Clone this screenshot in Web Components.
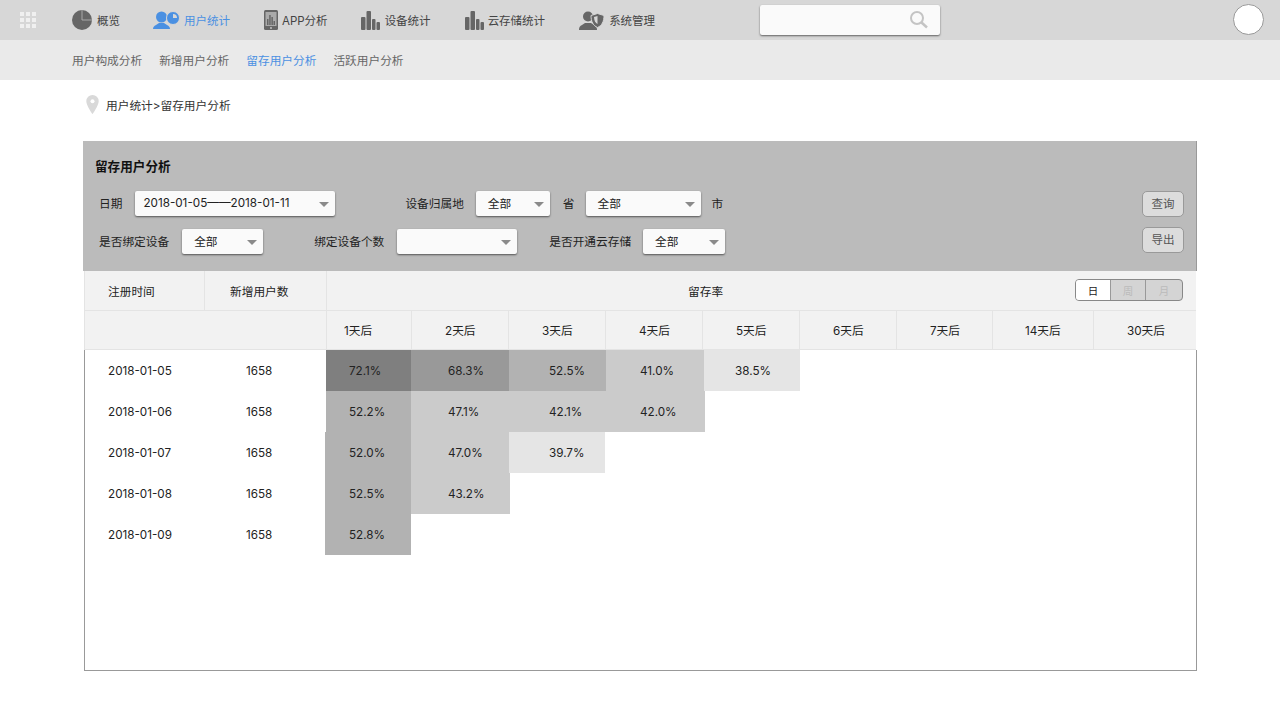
<!DOCTYPE html>
<html lang="zh-CN"><head><meta charset="utf-8"><title>留存用户分析</title>
<style>
html,body{margin:0;padding:0;background:#fff}
body{font-family:Inter,"Noto Sans CJK SC",sans-serif;font-size:12px;color:#333;width:1280px;height:720px;overflow:hidden}
</style></head><body>
<app-topbar>
  <nav-item label="概览" style="margin-left:72px;--w:25px"><svg viewBox="0 0 20 20" width="20" height="20"><circle cx="10" cy="10" r="10" fill="#666"/><path fill="none" stroke="#a8a8a8" stroke-width="1" d="M10 0V10H20"/></svg></nav-item>
  <nav-item label="用户统计" active style="margin-left:33px;--w:31px"><svg viewBox="0 0 27 20" width="27" height="20"><circle cx="8.500" cy="7" r="5.500" fill="#4a90e2"/><path fill="#4a90e2" d="M0 19c0-2 1-3 3-4l3-2h5l3 2c2 1 3 2 3 4Z"/><circle cx="20" cy="8" r="6.500" fill="#4a90e2" stroke="#d7d7d7"/><path fill="#d7d7d7" d="M20 4a4 4 0 0 1 4 4h-4Z"/></svg></nav-item>
  <nav-item label="APP分析" style="margin-left:34px;--w:18px"><svg viewBox="0 0 14 20" width="14" height="20"><rect width="14" height="20" rx="1.500" fill="#666"/><rect x="1.500" y="2" width="11" height="14" fill="#aaa"/><path fill="#666" d="M3 15V9h1.500v6Zm2.200 0V5h1.500v10Zm2.200 0V7h1.500v8Zm2.100 0v-4h1.500v4Z"/><circle cx="7" cy="18" r=".9" fill="#ccc"/></svg></nav-item>
  <nav-item label="设备统计" style="margin-left:33px;--w:24px"><svg viewBox="0 0 19 19" width="19" height="19"><g fill="#666"><rect y="6" width="4.500" height="13" rx="1"/><rect x="5.500" width="4.500" height="19" rx="1"/><rect x="11" y="8" width="3.500" height="11" rx="1"/><rect x="15.500" y="11" width="3.500" height="8" rx="1"/></g></svg></nav-item>
  <nav-item label="云存储统计" style="margin-left:34px;--w:23px"><svg viewBox="0 0 19 19" width="19" height="19"><g fill="#666"><rect y="6" width="4.500" height="13" rx="1"/><rect x="5.500" width="4.500" height="19" rx="1"/><rect x="11" y="8" width="3.500" height="11" rx="1"/><rect x="15.500" y="11" width="3.500" height="8" rx="1"/></g></svg></nav-item>
  <nav-item label="系统管理" style="margin-left:34px;--w:30px"><svg viewBox="0 0 25 19" width="25" height="19"><circle cx="9" cy="5.500" r="5" fill="#666"/><path fill="#666" d="M0 19c0-3 1-4 3-5l3-2h6l3 2c2 1 3 2 3 5Z"/><path fill="#666" stroke="#d7d7d7" d="M18.500 2.500 25 4.500c0 6-2 10-6.500 12C14 14.500 12 10.500 12 4.500Z"/><path fill="#d7d7d7" d="M18.500 5v8c-2-1-3.300-3-3.500-7Z"/></svg></nav-item>
  <search-box></search-box>
  <user-avatar></user-avatar>
</app-topbar>
<app-subnav><a>用户构成分析</a><a>新增用户分析</a><a class="on" style="color:#4a90e2">留存用户分析</a><a>活跃用户分析</a></app-subnav>
<app-crumb>用户统计&gt;留存用户分析</app-crumb>
<filter-panel>
  <span slot="title">留存用户分析</span>
  <filter-row slot="rows">
    <f-label style="margin-left:16px">日期</f-label>
    <select-box w="200" pad="8" style="margin-left:13px">2018-01-05——2018-01-11</select-box>
    <f-label style="margin-left:70px">设备归属地</f-label>
    <select-box w="74" pad="12" style="margin-left:12px">全部</select-box>
    <f-label style="margin-left:13px">省</f-label>
    <select-box w="115" pad="12" style="margin-left:11px">全部</select-box>
    <f-label style="margin-left:11px">市</f-label>
  </filter-row>
  <filter-row slot="rows">
    <f-label style="margin-left:16px">是否绑定设备</f-label>
    <select-box w="81" pad="12" style="margin-left:13px">全部</select-box>
    <f-label style="margin-left:51px">绑定设备个数</f-label>
    <select-box w="120" pad="12" style="margin-left:13px"></select-box>
    <f-label style="margin-left:32px">是否开通云存储</f-label>
    <select-box w="82" pad="12" style="margin-left:12px">全部</select-box>
  </filter-row>
  <soft-button slot="actions">查询</soft-button>
  <soft-button slot="actions">导出</soft-button>
</filter-panel>
<retention-table></retention-table>
<script>
function def(name, css, html){
  customElements.define(name, class extends HTMLElement{
    constructor(){super();this.attachShadow({mode:'open'});}
    connectedCallback(){
      this.shadowRoot.innerHTML='<style>'+css+'</style>'+(typeof html==='function'?html(this):html);
    }
  });
}
def('app-topbar',':host{display:flex;align-items:center;height:40px;background:#d7d7d7;position:relative;color:#444}.g{display:grid;grid-template-columns:repeat(3,4px);gap:2px;position:absolute;left:20px;top:12px}.g i{width:4px;height:4px;background:#f0f0f0;display:block}',
  '<div class="g">'+'<i></i>'.repeat(9)+'</div><slot></slot>');
def('nav-item',':host{display:flex;align-items:center;height:40px;font-size:11.5px;color:#444;flex:none}:host([active]){color:#4a90e2}.i{width:var(--w);display:flex;align-items:center;height:20px}.i ::slotted(svg){display:block}',
  h=>'<span class="i"><slot></slot></span><span>'+h.getAttribute('label')+'</span>');
def('search-box',':host{position:absolute;left:760px;top:5px;width:180px;height:30px;background:#fafafa;border-radius:2px;box-shadow:0 1px 2px rgba(0,0,0,.55)}svg{position:absolute;left:149px;top:5px}',
  '<svg width="20" height="20" viewBox="0 0 20 20" fill="none" stroke="#c4c4c4"><circle cx="8" cy="8" r="6" stroke-width="2"/><path d="m12.500 12.500 5.500 5" stroke-width="2.500"/></svg>');
def('user-avatar',':host{position:absolute;left:1233px;top:4px;width:29px;height:29px;border:1px solid #999;border-radius:50%;background:#fff}','');
def('app-subnav',':host{display:flex;align-items:center;box-sizing:border-box;height:40px;background:#eaeaea;padding:0 0 2px 72px;gap:17px;font-size:11.700px;color:#666}','<slot></slot>');
def('app-crumb',':host{display:flex;align-items:center;height:50px;padding:0 0 0 86px;font-size:11.700px;color:#333;gap:7px}svg{display:block;margin-top:-2px}span{padding-bottom:2px}',
  '<svg width="13" height="19" viewBox="0 0 13 19"><path fill="#d9d9d9" d="M6.500 0A6.200 6.200 0 0 0 .3 6.200C.3 10.500 6.500 19 6.500 19s6.200-8.500 6.200-12.800A6.200 6.200 0 0 0 6.500 0Z"/><circle cx="6.500" cy="6.200" r="2" fill="#fff"/></svg><span><slot></slot></span>');
def('filter-panel',':host{display:grid;grid-template-columns:1fr auto;grid-template-rows:50px auto;width:1114px;height:130px;margin:11px 0 0 83px;background:#bbb;box-sizing:border-box;color:#222;border-right:1px solid #999}.t{grid-column:1/3;padding:0 0 0 12px;display:flex;align-items:center;font-size:12.600px;font-weight:700;color:#111;height:48px}.r{display:flex;flex-direction:column;gap:13px}.a{display:flex;flex-direction:column;gap:10px;padding-right:12px}',
  '<div class="t"><slot name="title"></slot></div><div class="r"><slot name="rows"></slot></div><div class="a"><slot name="actions"></slot></div>');
def('filter-row',':host{display:flex;align-items:center;height:25px}','<slot></slot>');
def('f-label',':host{display:block;font-size:11.700px;color:#222;flex:none;margin-top:-2px}','<slot></slot>');
def('select-box',':host{display:flex;align-items:center;flex:none;box-sizing:border-box;height:25px;background:#fafafa;border-radius:2px;box-shadow:0 1px 2px rgba(0,0,0,.55);font-size:11.700px;color:#222;position:relative}span{padding-bottom:2px}i{position:absolute;right:6px;top:11px;width:0;height:0;border:5px solid transparent;border-top:5px solid #8a8a8a;border-bottom:0}',
  h=>'<style>:host{width:'+h.getAttribute('w')+'px;padding-left:'+h.getAttribute('pad')+'px}</style><span><slot></slot></span><i></i>');
def('soft-button',':host{display:flex;align-items:center;justify-content:center;width:42px;height:26px;box-sizing:border-box;padding-bottom:2px;background:#dcdcdc;border:1px solid #999;border-radius:5px;font-size:11.500px;color:#555}','<slot></slot>');
const heads=[[85,'1天后',17],[97,'2天后',33],[97,'3天后',33],[97,'4天后',33],[97,'5天后',33],[97,'6天后',33],[96,'7天后',33],[101,'14天后',32],[103,'30天后',33]];
const rows=[
 ['2018-01-05',[[85,'72.1%','#7f7f7f',23,0],[98,'68.3%','#999',37],[97,'52.5%','#b2b2b2',40],[98,'41.0%','#cbcbcb',34],[96,'38.5%','#e5e5e5',31]]],
 ['2018-01-06',[[85,'52.2%','#b2b2b2',23,0],[98,'47.1%','#cbcbcb',37],[97,'42.1%','#cbcbcb',40],[99,'42.0%','#cbcbcb',34]]],
 ['2018-01-07',[[86,'52.0%','#b2b2b2',24,-1],[98,'47.0%','#cbcbcb',37],[96,'39.7%','#e5e5e5',40]]],
 ['2018-01-08',[[86,'52.5%','#b2b2b2',24,-1],[99,'43.2%','#cbcbcb',37]]],
 ['2018-01-09',[[86,'52.8%','#b2b2b2',24,-1]]]
];
def('retention-table',`:host{display:block;width:1114px;margin-left:83px;font-size:11.700px;color:#222}
.h1,.h2{display:flex;background:#f2f2f2;box-sizing:border-box;margin-left:1px;width:1112px;border-bottom:1px solid #e4e4e4;border-left:1px solid #e4e4e4}
.h1{height:40px}.h2{height:39px}
.c{display:flex;align-items:center;box-sizing:border-box;flex:none;border-right:1px solid #e4e4e4;height:100%}
.h2 .c{padding-bottom:2px}
.h2 .c:last-child{border-right:0;flex:1;width:auto!important}
.h1 .a{width:120px;padding-left:23px}.h1 .b{width:122px;padding-left:25px}.h1 .s{flex:1;border:0;padding-left:361px;position:relative}
.sp{width:242px;border-right:1px solid #e4e4e4;box-sizing:border-box;flex:none}
.tg{position:absolute;left:748px;top:8px;display:flex;height:22px;width:108px;box-sizing:border-box;border:1px solid #888;border-radius:4px;overflow:hidden;background:#d4d4d4;font-size:10.500px}
.tg b{font-weight:400;width:35px;box-sizing:border-box;display:flex;align-items:center;justify-content:center;color:#bbb;border-left:1px solid #999}
.tg b:first-child{background:#fff;color:#222;border:0;width:34px}.tg b:last-child{flex:1}
.body{box-sizing:border-box;margin-left:1px;width:1113px;height:321px;border:1px solid #999;border-top:0}
.r{display:flex;height:41px;align-items:stretch}
.d{width:120px;padding-left:23px;box-sizing:border-box;display:flex;align-items:center;flex:none}
.n{width:121px;padding-left:41px;box-sizing:border-box;display:flex;align-items:center;flex:none}
.p{display:flex;align-items:center;box-sizing:border-box;flex:none;color:#222}`,
 ()=>'<div class="h1"><div class="c a">注册时间</div><div class="c b">新增用户数</div><div class="c s">留存率<div class="tg"><b>日</b><b>周</b><b>月</b></div></div></div>'+
 '<div class="h2"><div class="sp"></div>'+heads.map(h=>'<div class="c" style="width:'+h[0]+'px;padding-left:'+h[2]+'px">'+h[1]+'</div>').join('')+'</div>'+
 '<div class="body">'+rows.map(r=>'<div class="r"><div class="d">'+r[0]+'</div><div class="n">1658</div>'+r[1].map(c=>'<div class="p" style="width:'+c[0]+'px;background:'+c[2]+';padding-left:'+c[3]+'px;'+(c[4]?'margin-left:'+c[4]+'px':'')+'">'+c[1]+'</div>').join('')+'</div>').join('')+'</div>');
</script>
</body></html>
